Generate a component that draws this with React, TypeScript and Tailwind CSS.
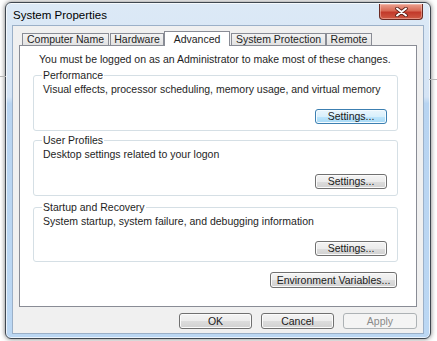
import React from "react";

const btnBase =
  "flex items-center justify-center rounded-[3px] border text-[10.5px] leading-none";
const btnNormal =
  "border-[#707070] bg-[linear-gradient(to_bottom,#f4f4f4_0%,#ececec_50%,#dddddd_51%,#d1d1d1_100%)] shadow-[inset_0_0_0_1px_#fbfbfb] text-[#1a1a1a]";
const btnFocus =
  "border-[#3c7fb1] bg-[linear-gradient(to_bottom,#eaf6fd_0%,#d9f0fc_50%,#bee6fd_51%,#a7d9f5_100%)] shadow-[inset_0_0_0_1px_#f4fbff] text-[#1a1a1a]";
const btnDisabled = "border-[#adb2b5] bg-[#f4f4f4] text-[#8a8a8a]";

function GroupBox({
  title,
  desc,
  focused,
  h,
  mt,
}: {
  title: string;
  desc: string;
  focused?: boolean;
  h: string;
  mt: string;
}) {
  return (
    <div
      className={`relative ml-[13px] w-[365px] rounded-[3px] border border-[#d5dfe5] ${h} ${mt}`}
    >
      <span className="absolute -top-[7px] left-[8px] bg-white px-[1px] leading-[13px] text-[#1e1e1e]">
        {title}
      </span>
      <div className="pt-[7px] pl-[9px] leading-[13px] text-[#1e1e1e]">{desc}</div>
      <div className="mt-[13px] flex justify-end pr-[10px]">
        <div className={`${btnBase} ${focused ? btnFocus : btnNormal} h-[15px] w-[72px]`}>
          Settings...
        </div>
      </div>
    </div>
  );
}

export default function App() {
  const tabN =
    "flex h-[12px] items-center justify-center border border-b-0 border-[#898c95] bg-[linear-gradient(to_bottom,#f3f3f3,#e2e2e2)] leading-none text-[#1e1e1e]";
  return (
    <div className="relative h-[341px] w-[437px] overflow-hidden bg-white font-['Liberation_Sans',Arial,sans-serif] text-[10.5px]">
      <div className="absolute left-0 top-[76px] h-px w-[6px] bg-[#b8b8b8]" />
      <div className="absolute right-0 top-[79px] h-px w-[8px] bg-[#b8b8b8]" />
      <div className="ml-[5px] mt-[2px] flex h-[337px] w-[426px] flex-col rounded-[6px] border border-[#3f4750] bg-[linear-gradient(to_bottom,#dce9f6_0%,#d5e4f5_28%,#b8d4f1_30%,#bbd7f3_100%)] shadow-[0_0_5px_rgba(0,0,0,0.55),inset_0_0_0_1px_rgba(255,255,255,0.7)]">
        {/* title bar */}
        <div className="flex h-[22px] items-start justify-between pl-[7px] pr-[7px]">
          <span className="mt-[5px] text-[11.5px] leading-[14px] text-black">
            System Properties
          </span>
          <div className="mt-px flex h-[16px] w-[44px] items-center justify-center rounded-b-[4px] border border-t-0 border-[#6b2a22] bg-[linear-gradient(to_bottom,#eba08f_0%,#d86a55_45%,#c2392a_55%,#cf5a44_100%)] shadow-[inset_0_0_0_1px_rgba(255,210,200,0.45)]">
            <svg width="13" height="10" viewBox="0 0 13 10">
              <path
                d="M2 1.5 L11 8.5 M11 1.5 L2 8.5"
                stroke="#5a2018"
                strokeWidth="3.6"
                strokeLinecap="round"
              />
              <path
                d="M2 1.5 L11 8.5 M11 1.5 L2 8.5"
                stroke="#ffffff"
                strokeWidth="2"
                strokeLinecap="round"
              />
            </svg>
          </div>
        </div>
        {/* client area */}
        <div className="ml-[6px] flex h-[309px] w-[412px] flex-col border border-[#9bb0c8] bg-[#f0f0f0] pt-[5px]">
          <div className="relative z-10 flex h-[14px] items-end">
            <div className={`${tabN} ml-[9px] w-[87px]`}>Computer Name</div>
            <div className={`${tabN} ml-px w-[54px]`}>Hardware</div>
            <div className="flex h-[15px] w-[66px] -mb-px items-start justify-center border border-b-0 border-[#898c95] bg-white pt-[2px] leading-none text-[#1e1e1e]">
              Advanced
            </div>
            <div className={`${tabN} ml-px w-[95px]`}>System Protection</div>
            <div className={`${tabN} w-[46px]`}>Remote</div>
          </div>
          <div className="ml-[6px] h-[262px] w-[398px] border border-[#898c95] bg-white">
            <div className="pl-[19px] pt-[7px] leading-[13px] text-[#1e1e1e]">
              You must be logged on as an Administrator to make most of these changes.
            </div>
            <GroupBox
              title="Performance"
              desc="Visual effects, processor scheduling, memory usage, and virtual memory"
              focused
              h="h-[56px]"
              mt="mt-[9px]"
            />
            <GroupBox
              title="User Profiles"
              desc="Desktop settings related to your logon"
              h="h-[56px]"
              mt="mt-[9px]"
            />
            <GroupBox
              title="Startup and Recovery"
              desc="System startup, system failure, and debugging information"
              h="h-[55px]"
              mt="mt-[11px]"
            />
            <div className="mt-[10px] flex justify-end pr-[19px]">
              <div className={`${btnBase} ${btnNormal} h-[16px] w-[127px]`}>
                Environment Variables...
              </div>
            </div>
          </div>
          <div className="mt-[6px] flex justify-end gap-[9px] pr-[6px]">
            <div className={`${btnBase} ${btnNormal} h-[16px] w-[73px]`}>OK</div>
            <div className={`${btnBase} ${btnNormal} h-[16px] w-[73px]`}>Cancel</div>
            <div className={`${btnBase} ${btnDisabled} h-[16px] w-[74px]`}>Apply</div>
          </div>
        </div>
      </div>
    </div>
  );
}
